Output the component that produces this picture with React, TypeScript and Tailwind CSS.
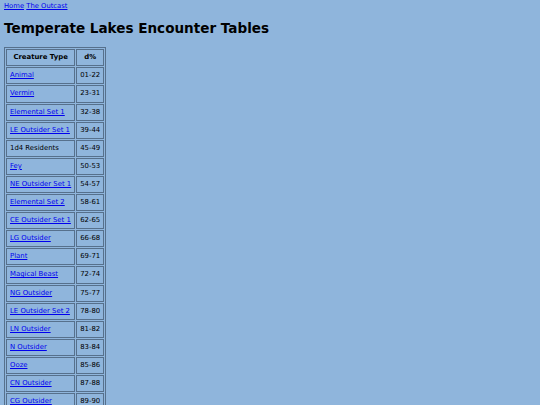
const rows: [string, string, boolean][] = [
  ["Animal", "01-22", true],
  ["Vermin", "23-31", true],
  ["Elemental Set 1", "32-38", true],
  ["LE Outsider Set 1", "39-44", true],
  ["1d4 Residents", "45-49", false],
  ["Fey", "50-53", true],
  ["NE Outsider Set 1", "54-57", true],
  ["Elemental Set 2", "58-61", true],
  ["CE Outsider Set 1", "62-65", true],
  ["LG Outsider", "66-68", true],
  ["Plant", "69-71", true],
  ["Magical Beast", "72-74", true],
  ["NG Outsider", "75-77", true],
  ["LE Outsider Set 2", "78-80", true],
  ["LN Outsider", "81-82", true],
  ["N Outsider", "83-84", true],
  ["Ooze", "85-86", true],
  ["CN Outsider", "87-88", true],
  ["CG Outsider", "89-90", true],
];

export default function App() {
  return (
    <div className="min-h-[405px] bg-[#8fb5dc] px-[4px] pt-[3px] pb-4 text-black font-['DejaVu_Sans',Verdana,sans-serif]">
      {/* Breadcrumb links */}
      <div className="text-[6.8px] leading-[7.8px]">
        <a href="#" className="text-[#0000ee] underline">Home</a>{" "}
        <a href="#" className="text-[#0000ee] underline">The Outcast</a>
      </div>

      <h1 className="mt-[10px] text-[13.55px] leading-[15.5px] font-bold">
        Temperate Lakes Encounter Tables
      </h1>

      <table className="mt-[11px] border-separate border-spacing-[1px] border border-[#56708c] text-[6.9px] leading-[9.1px]">
        <thead>
          <tr>
            <th className="border border-[#56708c] px-[3px] py-[3px] text-center font-bold">Creature Type</th>
            <th className="border border-[#56708c] px-[3px] py-[3px] text-center font-bold">d%</th>
          </tr>
        </thead>
        <tbody>
          {rows.map(([name, range, link]) => (
            <tr key={name}>
              <td className="border border-[#56708c] px-[3px] py-[3px] text-left whitespace-nowrap">
                {link ? (
                  <a href="#" className="text-[#0000ee] underline">{name}</a>
                ) : (
                  name
                )}
              </td>
              <td className="border border-[#56708c] px-[3px] py-[3px] text-left whitespace-nowrap">{range}</td>
            </tr>
          ))}
        </tbody>
      </table>
    </div>
  );
}
